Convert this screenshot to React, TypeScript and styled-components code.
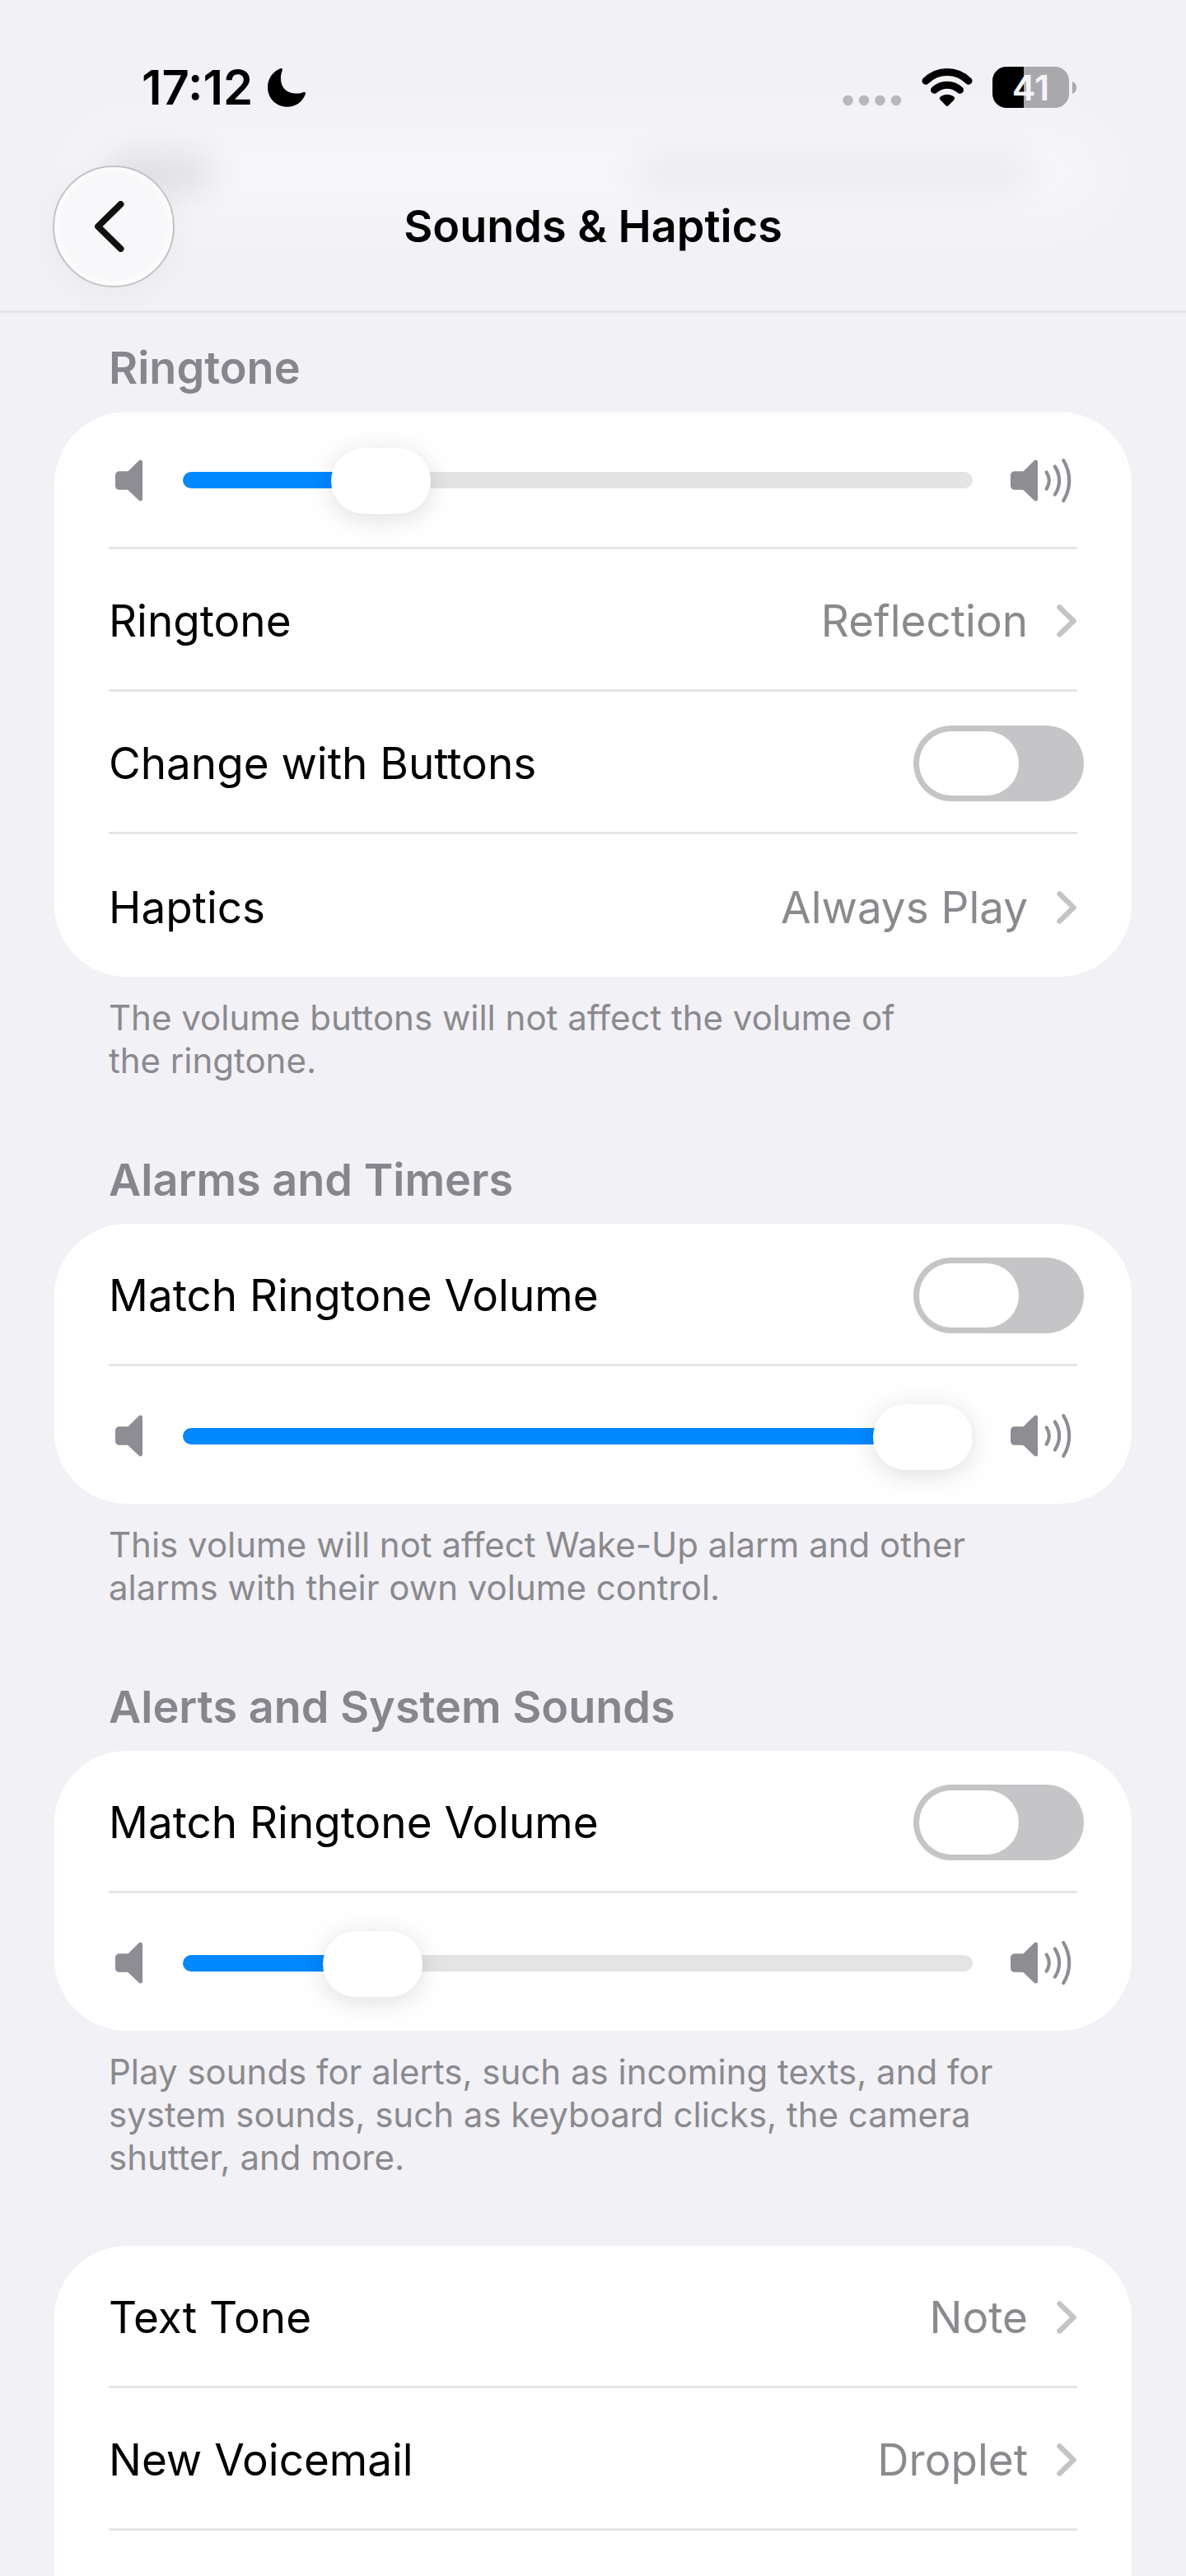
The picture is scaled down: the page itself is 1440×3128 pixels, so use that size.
import React, { useId, useState } from "react";
import styled, { createGlobalStyle } from "styled-components";

const color = {
  page: "#f2f1f6",
  card: "#ffffff",
  text: "#000000",
  secondary: "#8a8a8e",
  sectionTitle: "#87868c",
  icon: "#8e8d93",
  separator: "#e6e6e6",
  chevron: "#c4c4c6",
  track: "#e4e4e4",
  tint: "#0088ff",
  switchOff: "#c5c5c7",
};

const GlobalStyle = createGlobalStyle`
  *, *::before, *::after { box-sizing: border-box; }
  body {
    margin: 0;
    background: ${color.page};
    color: ${color.text};
    font-family: Inter, "Liberation Sans", sans-serif;
    -webkit-font-smoothing: antialiased;
  }
  button, input { font: inherit; color: inherit; margin: 0; }
`;

const Screen = styled.div`
  min-height: 100vh;
  display: flex;
  flex-direction: column;
`;

const Header = styled.header`
  position: relative;
  border-bottom: 3px solid #e5e4e9;
  overflow: hidden;
`;

const ScrolledCard = styled.div`
  position: absolute;
  left: 90px;
  right: 90px;
  top: 150px;
  height: 120px;
  border-radius: 60px;
  background: rgba(255, 255, 255, 0.36);
  filter: blur(36px);
`;

const ScrolledText = styled.div<{ $side: "left" | "right"; $width: number; $alpha: number }>`
  position: absolute;
  top: 186px;
  ${(p) => (p.$side === "left" ? "left: 132px;" : "right: 188px;")}
  width: ${(p) => p.$width}px;
  height: 48px;
  border-radius: 24px;
  background: rgba(0, 0, 0, ${(p) => p.$alpha});
  filter: blur(20px);
`;

const StatusBar = styled.div`
  position: relative;
  display: flex;
  align-items: center;
  justify-content: space-between;
  height: 201px;
  padding: 76px 133px 65px 172px;
`;

const StatusGroup = styled.div<{ $gap: number }>`
  display: flex;
  align-items: center;
  gap: ${(p) => p.$gap}px;
`;

const Clock = styled.time`
  font-size: 58px;
  font-weight: 600;
  line-height: 60px;
`;

const Battery = styled.div`
  display: flex;
  align-items: center;
  gap: 4px;
`;

const BatteryBody = styled.div<{ $level: number }>`
  display: grid;
  place-items: center;
  width: 93px;
  height: 50px;
  border-radius: 17px;
  background: linear-gradient(
    to right,
    #000 ${(p) => p.$level}%,
    #a9a9ab ${(p) => p.$level}%
  );
  color: #f4f4f8;
  font-size: 43px;
  font-weight: 600;
  line-height: 50px;
`;

const NavBar = styled.nav`
  position: relative;
  display: grid;
  grid-template-columns: 1fr auto 1fr;
  align-items: center;
  padding: 0 64px 28px;
`;

const BackButton = styled.button`
  display: grid;
  place-items: center;
  width: 148px;
  height: 148px;
  padding: 0;
  border: 2px solid #c3c3c6;
  border-radius: 50%;
  background: #f8f8fa;
  box-shadow: inset 0 0 10px 3px #ffffff, 0 8px 40px rgba(0, 0, 0, 0.04);
`;

const PageTitle = styled.h1`
  margin: 0;
  font-size: 54px;
  font-weight: 600;
  line-height: 66px;
`;

const Content = styled.main`
  flex: 1;
  display: flex;
  flex-direction: column;
  padding: 29px 66px 0;
`;

const Section = styled.section<{ $grow?: boolean }>`
  display: flex;
  flex-direction: column;
  ${(p) => p.$grow && "flex: 1;"}
`;

const SectionTitle = styled.h2`
  margin: 0;
  padding: 5px 66px 20px;
  color: ${color.sectionTitle};
  font-size: 54px;
  font-weight: 600;
  line-height: 66px;
`;

const Card = styled.div<{ $open?: boolean }>`
  flex: 1;
  padding: 0 66px;
  border-radius: ${(p) => (p.$open ? "88px 88px 0 0" : "88px")};
  background: ${color.card};
`;

const Note = styled.p`
  margin: 0;
  padding: 24px 132px 81px 66px;
  color: ${color.secondary};
  font-size: 42px;
  line-height: 52px;
`;

const Row = styled.div<{ $slider?: boolean }>`
  display: flex;
  align-items: center;
  justify-content: space-between;
  width: 100%;
  height: ${(p) => (p.$slider ? 167 : 173)}px;
  padding: 4px 0 0;
  border: 0 solid ${color.separator};
  border-bottom-width: 3px;
  background: none;
  font-size: 53px;
  line-height: 66px;
  &:last-child {
    border-bottom: 0;
  }
`;

const NavRowButton = styled(Row)`
  text-align: left;
`;

const RowValue = styled.span`
  display: flex;
  align-items: center;
  gap: 34px;
  color: ${color.secondary};
`;

const Switch = styled.input`
  appearance: none;
  display: flex;
  flex: none;
  width: 207px;
  height: 92px;
  margin-right: -8px;
  padding: 7px;
  border-radius: 46px;
  background: ${color.switchOff};
  &::before {
    content: "";
    width: 121px;
    border-radius: 39px;
    background: #fff;
  }
  &:checked {
    justify-content: flex-end;
    background: #34c759;
  }
`;

const SliderRow = styled(Row)`
  padding: 2px 7px 0 8px;
  gap: 46px;
`;

const Slider = styled.input`
  appearance: none;
  flex: 1;
  min-width: 0;
  height: 80px;
  background: none;
  &::-webkit-slider-runnable-track {
    height: 20px;
    border-radius: 10px;
    background: linear-gradient(
      to right,
      ${color.tint} var(--fill),
      ${color.track} var(--fill)
    );
  }
  &::-webkit-slider-thumb {
    appearance: none;
    width: 121px;
    height: 80px;
    margin-top: -29px;
    border-radius: 40px;
    background: #fff;
    box-shadow: 0 6px 28px rgba(0, 0, 0, 0.1), 0 2px 60px rgba(0, 0, 0, 0.04);
  }
`;

const Moon = () => (
  <svg width="46" height="47" viewBox="0 0 46 47" aria-hidden="true">
    <path
      d="M15.4.3C17.3-.4 18.4.9 17.7 2.7 16.4 6 15.9 9 15.9 12c0 11.600 7.400 18.600 19 18.600 3 0 5.800-.6 8.300-1.600 2-.8 3.300.4 2.600 2.300C42.500 40.700 34.200 46.700 24.200 46.700 10.300 46.700 0 36.500 0 22.700 0 12.700 6.200 3.700 15.400.3Z"
      fill="#000"
    />
  </svg>
);

const SignalDots = () => (
  <svg width="72" height="50" viewBox="0 0 72 50" aria-hidden="true" fill="#b7b7bc">
    {[6.5, 26, 45.5, 65].map((x) => (
      <circle key={x} cx={x} cy="41" r="6.200" />
    ))}
  </svg>
);

const Wifi = () => (
  <svg width="62" height="48" viewBox="0 0 62 48" aria-hidden="true">
    <g fill="none" stroke="#000" strokeWidth="9" strokeLinecap="round">
      <path d="M5 16.200C12 9.500 21 5.500 31 5.500s19 4 26 10.700" />
      <path d="M15.500 27.300c4.200-3.900 9.600-6.100 15.500-6.100s11.300 2.200 15.500 6.100" />
    </g>
    <path
      d="M31 32.700c3 0 5.900 1 8.200 2.800 1.200 1 1.300 2.600.2 3.700l-6.900 7c-.9.900-2.100.9-3 0l-6.900-7c-1.100-1.100-1-2.700.2-3.700 2.300-1.800 5.200-2.800 8.200-2.800Z"
      fill="#000"
    />
  </svg>
);

const BatteryTip = () => (
  <svg width="5" height="15" viewBox="0 0 5 15" aria-hidden="true">
    <path d="M0 0c3 1 5 4 5 7.500S3 14 0 15Z" fill="#a9a9ab" />
  </svg>
);

const BackIcon = () => (
  <svg width="38" height="62" viewBox="0 0 38 62" aria-hidden="true">
    <path
      d="M32.500 4 5 31l27.500 27"
      fill="none"
      stroke="#111"
      strokeWidth="8"
      strokeLinecap="round"
      strokeLinejoin="round"
    />
  </svg>
);

const BackIconSlot = styled.span`
  display: flex;
  padding-right: 10px;
`;

const Chevron = () => (
  <svg width="26" height="40" viewBox="0 0 26 40" aria-hidden="true">
    <path
      d="M4.500 3.500 21.500 20l-17 16.500"
      fill="none"
      stroke={color.chevron}
      strokeWidth="6.500"
      strokeLinecap="round"
      strokeLinejoin="round"
    />
  </svg>
);

const speakerPath =
  "M5.500 14.300H14c1 0 1.600-.2 2.300-.9L27.500 2.400C28.900 1 29.700.6 30.700.6c1.400 0 2.300 1 2.300 2.400v45c0 1.400-.9 2.400-2.300 2.400-1 0-1.800-.4-3.200-1.800L16.300 37.700c-.7-.7-1.300-.9-2.300-.9H5.500C2 36.800 0 34.900 0 31.400V19.700c0-3.500 2-5.400 5.500-5.400Z";

const SpeakerQuiet = () => (
  <svg width="36" height="51" viewBox="0 0 36 51" aria-hidden="true">
    <path d={speakerPath} fill={color.icon} />
  </svg>
);

const SpeakerLoud = () => (
  <svg width="74" height="55" viewBox="0 -2 74 55" aria-hidden="true">
    <path d={speakerPath} fill={color.icon} />
    <g fill="none" stroke={color.icon} strokeWidth="4.200" strokeLinecap="round">
      <path d="M43.700 15.500c3.900 6.300 3.900 13.800 0 20.100" />
      <path d="M53.800 8.500c7.100 10.500 7.100 23.600 0 34.100" />
      <path d="M64.200 1c9.300 15 9.300 34 0 49" />
    </g>
  </svg>
);

function NavRow({ label, value }: { label: string; value: string }) {
  return (
    <NavRowButton as="button" type="button">
      {label}
      <RowValue>
        {value}
        <Chevron />
      </RowValue>
    </NavRowButton>
  );
}

function ToggleRow({ label }: { label: string }) {
  const id = useId();
  const [on, setOn] = useState(false);
  return (
    <Row>
      <label htmlFor={id}>{label}</label>
      <Switch
        id={id}
        type="checkbox"
        role="switch"
        checked={on}
        onChange={(e) => setOn(e.target.checked)}
      />
    </Row>
  );
}

function VolumeRow({ label, initial }: { label: string; initial: number }) {
  const [value, setValue] = useState(initial);
  return (
    <SliderRow $slider>
      <SpeakerQuiet />
      <Slider
        type="range"
        min={0}
        max={1000}
        value={value}
        aria-label={label}
        onChange={(e) => setValue(Number(e.target.value))}
        style={{ "--fill": `${value / 10}%` } as React.CSSProperties}
      />
      <SpeakerLoud />
    </SliderRow>
  );
}

export default function App() {
  return (
    <>
      <GlobalStyle />
      <Screen>
        <Header>
          <ScrolledCard />
          <ScrolledText $side="left" $width={126} $alpha={0.09} />
          <ScrolledText $side="right" $width={480} $alpha={0.038} />
          <StatusBar>
            <StatusGroup $gap={18}>
              <Clock>17:12</Clock>
              <Moon />
            </StatusGroup>
            <StatusGroup $gap={24}>
              <SignalDots />
              <Wifi />
              <Battery>
                <BatteryBody $level={41}>41</BatteryBody>
                <BatteryTip />
              </Battery>
            </StatusGroup>
          </StatusBar>
          <NavBar>
            <BackButton type="button" aria-label="Back">
              <BackIconSlot>
                <BackIcon />
              </BackIconSlot>
            </BackButton>
            <PageTitle>Sounds &amp; Haptics</PageTitle>
          </NavBar>
        </Header>
        <Content>
          <Section>
            <SectionTitle>Ringtone</SectionTitle>
            <Card>
              <VolumeRow label="Ringtone volume" initial={215} />
              <NavRow label="Ringtone" value="Reflection" />
              <ToggleRow label="Change with Buttons" />
              <NavRow label="Haptics" value="Always Play" />
            </Card>
            <Note>The volume buttons will not affect the volume of the&nbsp;ringtone.</Note>
          </Section>
          <Section>
            <SectionTitle>Alarms and Timers</SectionTitle>
            <Card>
              <ToggleRow label="Match Ringtone Volume" />
              <VolumeRow label="Alarm volume" initial={1000} />
            </Card>
            <Note>
              This volume will not affect Wake-Up alarm and other alarms with their own volume
              control.
            </Note>
          </Section>
          <Section>
            <SectionTitle>Alerts and System Sounds</SectionTitle>
            <Card>
              <ToggleRow label="Match Ringtone Volume" />
              <VolumeRow label="Alert volume" initial={203} />
            </Card>
            <Note>
              Play sounds for alerts, such as incoming texts, and for system sounds, such as
              keyboard clicks, the camera shutter, and more.
            </Note>
          </Section>
          <Section $grow>
            <Card $open>
              <NavRow label="Text Tone" value="Note" />
              <NavRow label="New Voicemail" value="Droplet" />
              <div />
            </Card>
          </Section>
        </Content>
      </Screen>
    </>
  );
}
